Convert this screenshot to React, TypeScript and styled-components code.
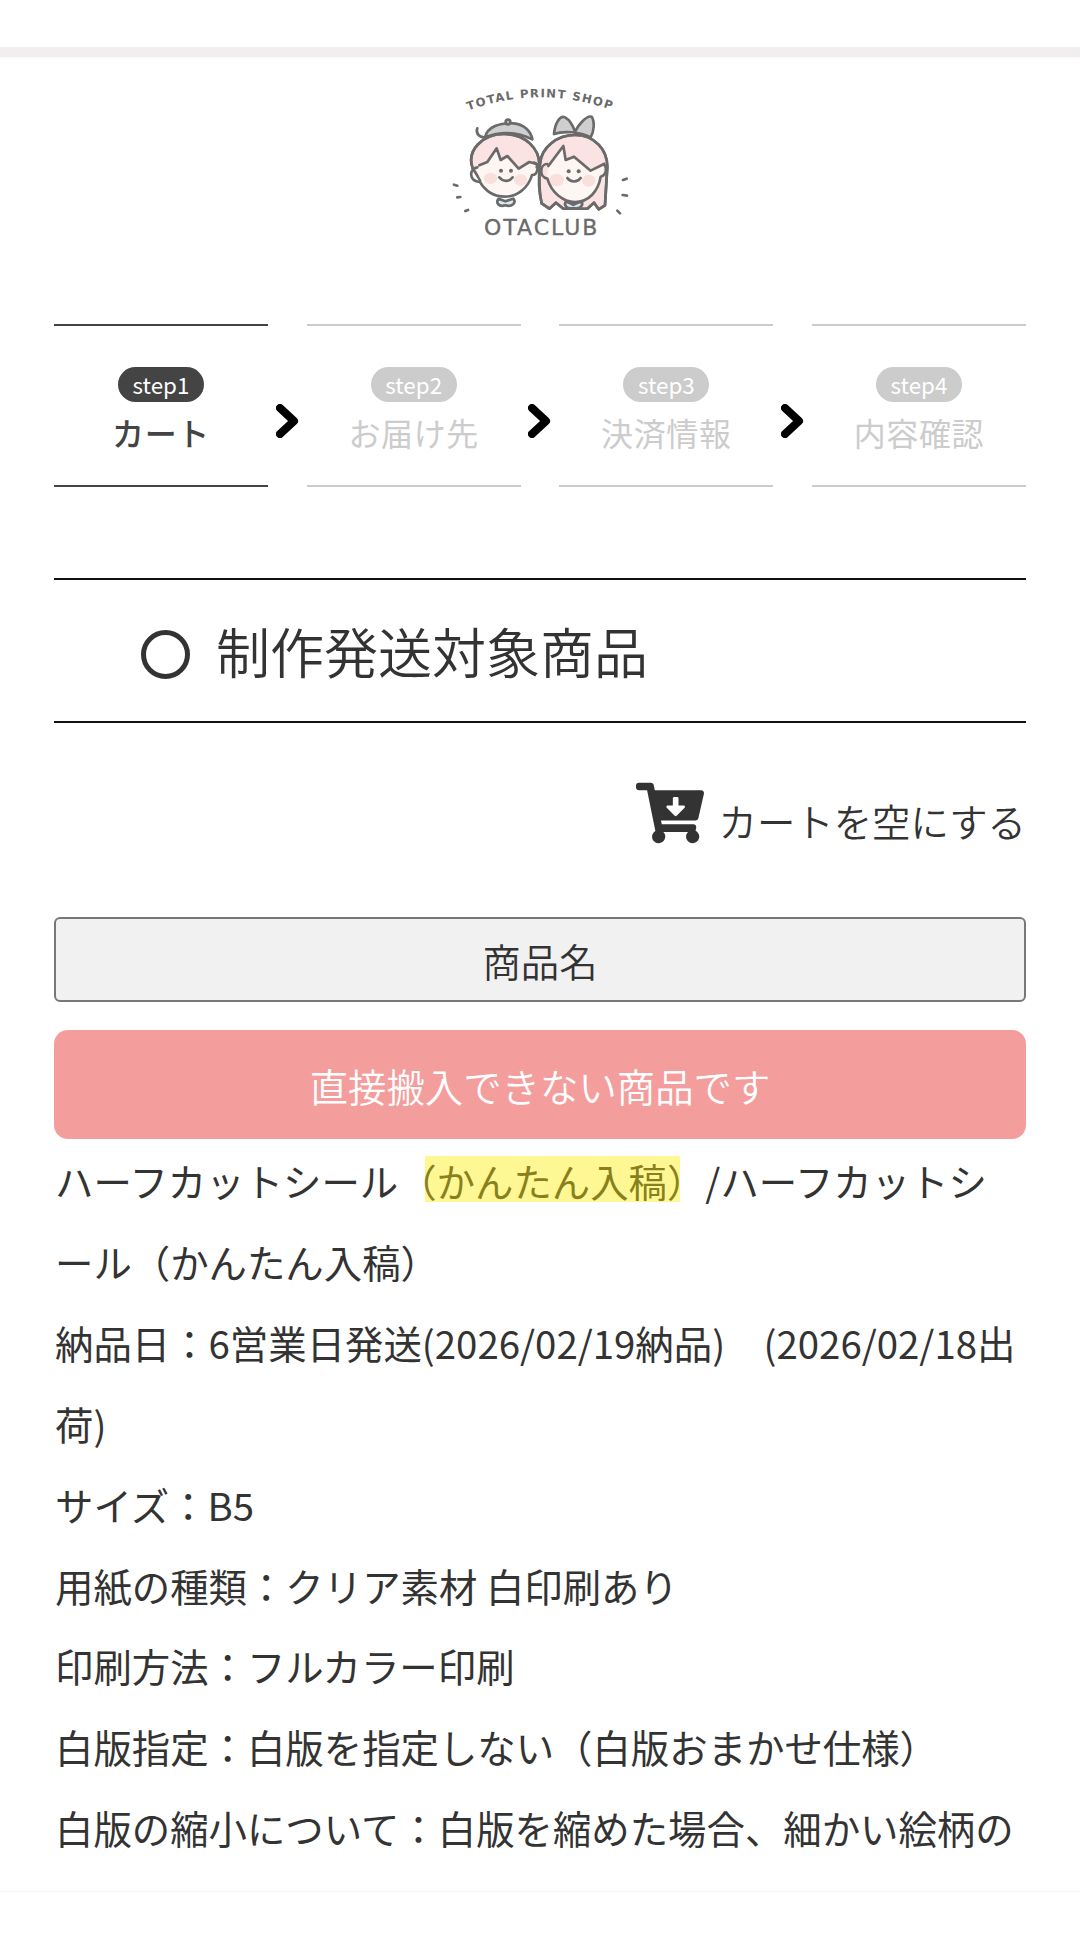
import React from 'react';
import styled, { createGlobalStyle } from 'styled-components';
import { FaCartArrowDown } from 'react-icons/fa';

const GlobalStyle = createGlobalStyle`
    html,
    body {
        margin: 0;
        padding: 0;
        background: #fff;
    }

    body {
        font-family: 'Noto Sans CJK JP', 'Noto Sans', sans-serif;
        color: #333;
    }
`;

const Page = styled.div`
    width: 1080px;
    height: 1942px;
    overflow: hidden;
    display: flex;
    flex-direction: column;
    background: #fff;
`;

const TopBar = styled.div`
    flex: none;
    height: 47px;
    background: #fff;
    border-bottom: 10px solid #f0eeee;
    box-shadow: 0 1px 2px rgba(80, 60, 60, 0.05), 0 -3px 3px rgba(80, 60, 60, 0.02);
`;

const LogoWrap = styled.div`
    flex: none;
    height: 200px;
    margin-top: 3px;
    display: flex;
    justify-content: center;
`;

const Main = styled.main`
    flex: 1;
    min-height: 0;
    overflow: hidden;
    padding: 0 54px;
`;

const Steps = styled.div`
    display: flex;
    align-items: center;
    justify-content: space-between;
    margin-top: 64px;
`;

const Step = styled.div<{ $active?: boolean }>`
    width: 214px;
    height: 163px;
    box-sizing: border-box;
    display: flex;
    flex-direction: column;
    align-items: center;
    padding-top: 41px;
    border-top: 2px solid ${({ $active }) => ($active ? '#444' : '#ccc')};
    border-bottom: 2px solid ${({ $active }) => ($active ? '#444' : '#ccc')};
    color: ${({ $active }) => ($active ? '#444' : '#ccc')};
`;

const StepPill = styled.span<{ $active?: boolean }>`
    width: 86px;
    height: 35px;
    border-radius: 18px;
    display: flex;
    align-items: center;
    justify-content: center;
    background: ${({ $active }) => ($active ? '#444' : '#ccc')};
    color: #fff;
    font-size: 22.4px;
    line-height: 35px;
`;

const StepLabel = styled.span<{ $active?: boolean }>`
    margin-top: 12px;
    font-size: 32px;
    line-height: 36px;
    letter-spacing: 0.6px;
    font-weight: ${({ $active }) => ($active ? 500 : 400)};
`;

const StepArrow = styled.svg`
    flex: none;
    width: 23px;
    height: 34px;
    margin-top: 30px;
`;

const Heading = styled.h2`
    margin: 91px 0 0;
    height: 145px;
    box-sizing: border-box;
    display: flex;
    align-items: center;
    gap: 26px;
    padding: 0 0 0 87px;
    border-top: 2px solid #111;
    border-bottom: 2px solid #111;
    font-size: 54px;
    font-weight: 350;
    color: #333;
`;

const HeadingMark = styled.span`
    flex: none;
    width: 49px;
    height: 49px;
    margin-top: 7px;
    box-sizing: border-box;
    border: 5px solid #333;
    border-radius: 50%;
`;

const EmptyCart = styled.div`
    display: flex;
    justify-content: flex-end;
    align-items: flex-end;
    gap: 14px;
    margin-top: 56px;
    color: #333;
    font-size: 38.4px;
    font-weight: 350;
    line-height: 53px;
`;

const NameHead = styled.div`
    margin-top: 70px;
    height: 85px;
    box-sizing: border-box;
    display: flex;
    align-items: center;
    justify-content: center;
    border: 2px solid #777;
    border-radius: 6px;
    background: #f1f1f1;
    font-size: 38.4px;
    font-weight: 350;
`;

const Notice = styled.div`
    margin-top: 28px;
    height: 109px;
    display: flex;
    align-items: center;
    justify-content: center;
    border-radius: 14px;
    background: #f49d9d;
    color: #fff;
    font-size: 38.4px;
    font-weight: 350;
`;

const Details = styled.div`
    margin: 1px 2px 0 1px;
    font-size: 38.4px;
    font-weight: 400;
    line-height: 80.9px;
    color: #333;
`;

const DetailLine = styled.div``;

const Marked = styled.span`
    position: relative;

    &::after {
        content: '';
        position: absolute;
        left: 27px;
        right: 25px;
        top: 4px;
        height: 46px;
        background: rgba(255, 235, 0, 0.42);
    }
`;

const BottomBar = styled.div`
    flex: none;
    height: 50px;
    background: #fff;
    border-top: 1px solid #f6f6f6;
`;

const LOGO_INK = '#6a6a6a';

const Logo: React.FC = () => (
    <svg width="280" height="200" viewBox="0 0 840 600" fill="none" stroke={LOGO_INK} strokeWidth="8" strokeLinecap="round" strokeLinejoin="round">
        <defs>
            <path id="logo-arc" d="M205 152 Q420 72 640 152" />
        </defs>

        {/* boy */}
        <path d="M255 232 C262 200 300 188 340 190 C370 192 392 212 397 238 C350 215 300 215 255 232Z" fill="#cfcfcf" />
        <path d="M232 205 C226 220 238 232 252 232" />
        <circle cx="324" cy="186" r="7" fill="#cfcfcf" />
        <path d="M218 325 C198 270 250 222 312 222 C375 222 420 265 418 318 L240 360Z" fill="#fae3e2" />
        <path d="M228 320 L262 306 L290 265 L302 300 L322 288 L356 326 L388 306 L408 312 C405 345 385 378 345 396 C325 408 298 406 282 396 C250 380 235 350 228 320Z" fill="#fdf6f2" stroke="none" />
        <ellipse cx="272" cy="355" rx="20" ry="17" fill="#fae0dc" stroke="none" />
        <ellipse cx="362" cy="360" rx="20" ry="17" fill="#fae0dc" stroke="none" />
        <path d="M218 325 C198 270 250 222 312 222 C375 222 420 265 418 318" />
        <path d="M238 316 L262 306 L290 265 L302 300 L322 288 L356 326 L388 306 L410 312" />
        <path d="M232 322 C208 326 204 362 240 366 C258 396 285 410 315 410 C350 410 385 385 396 345 C415 345 418 312 402 308" />
        <circle cx="303" cy="332" r="6" fill={LOGO_INK} stroke="none" />
        <circle cx="333" cy="332" r="6" fill={LOGO_INK} stroke="none" />
        <path d="M298 352 C308 366 328 366 338 352" />
        <path d="M316 424 L296 416 C286 428 296 442 316 436 C336 442 350 428 340 416Z" fill="#dbe9f2" />

        {/* girl */}
        <path d="M462 222 C465 190 480 165 495 172 C510 180 520 200 525 215 C535 195 560 165 575 170 C585 185 582 215 572 232 C540 215 490 212 462 222Z" fill="#cfcfcf" />
        <path d="M420 310 C425 262 470 225 525 225 C585 225 622 270 622 320 L615 436 L596 448 L582 428 L562 446 L490 446 L468 428 L448 446 L425 430 C415 390 418 350 420 310Z" fill="#fae3e2" />
        <path d="M445 318 L490 258 L497 300 L522 290 L572 332 L612 312 L605 360 C590 405 555 425 520 426 C480 426 450 400 440 365Z" fill="#fdf6f2" stroke="none" />
        <ellipse cx="470" cy="360" rx="22" ry="19" fill="#fae0dc" stroke="none" />
        <ellipse cx="566" cy="362" rx="20" ry="18" fill="#fae0dc" stroke="none" />
        <path d="M420 310 C425 262 470 225 525 225 C585 225 622 270 622 320 L615 436 L596 448 L582 428 L562 446" />
        <path d="M420 310 C415 350 415 390 425 430 L448 446 L468 428 L490 446" />
        <path d="M445 318 L490 258 L497 300 L522 290 L572 332 L612 312" />
        <path d="M442 312 C420 312 415 350 442 356 C455 400 490 426 525 426 C565 426 595 395 602 350 C620 345 622 325 612 312" />
        <circle cx="506" cy="334" r="6" fill={LOGO_INK} stroke="none" />
        <circle cx="536" cy="334" r="6" fill={LOGO_INK} stroke="none" />
        <path d="M502 354 C512 368 532 368 542 354" />
        <path d="M520 434 L498 424 C490 436 500 448 520 444 C540 448 552 436 544 424Z" fill="#dbe9f2" />

        {/* sparkle dashes */}
        <path d="M162 374 L172 377 M172 412 L181 411 M196 453 L204 450 M669 360 L680 356 M668 405 L681 407 M652 452 L660 460" />

        <text fontFamily="'DejaVu Sans', sans-serif" fontWeight="700" fontSize="35" letterSpacing="4" fill={LOGO_INK} stroke="none">
            <textPath href="#logo-arc">TOTAL PRINT SHOP</textPath>
        </text>
        <text x="252" y="524" fontFamily="'DejaVu Sans', sans-serif" fontSize="66" letterSpacing="6" fill={LOGO_INK} stroke={LOGO_INK} strokeWidth="1">
            OTACLUB
        </text>
    </svg>
);

const Arrow: React.FC = () => (
    <StepArrow viewBox="0 0 23 34" fill="none" stroke="#000" strokeWidth="8" strokeLinecap="round" strokeLinejoin="round">
        <path d="M4 4 L18 17 L4 30" />
    </StepArrow>
);

const steps = ['カート', 'お届け先', '決済情報', '内容確認'];

const details = [
    '納品日：6営業日発送(2026/02/19納品)　(2026/02/18出荷)',
    'サイズ：B5',
    '用紙の種類：クリア素材 白印刷あり',
    '印刷方法：フルカラー印刷',
    '白版指定：白版を指定しない（白版おまかせ仕様）',
    '白版の縮小について：白版を縮めた場合、細かい絵柄の',
];

const App: React.FC = () => (
    <Page>
        <GlobalStyle />
        <TopBar />
        <LogoWrap>
            <Logo />
        </LogoWrap>

        <Main>
            <Steps>
                {steps.map((label, i) => (
                    <React.Fragment key={label}>
                        {i > 0 && <Arrow />}
                        <Step $active={i === 0}>
                            <StepPill $active={i === 0}>step{i + 1}</StepPill>
                            <StepLabel $active={i === 0}>{label}</StepLabel>
                        </Step>
                    </React.Fragment>
                ))}
            </Steps>

            <Heading>
                <HeadingMark />
                制作発送対象商品
            </Heading>

            <EmptyCart>
                <FaCartArrowDown size={68} />
                カートを空にする
            </EmptyCart>

            <NameHead>商品名</NameHead>
            <Notice>直接搬入できない商品です</Notice>

            <Details>
                <DetailLine>
                    ハーフカットシール<Marked>（かんたん入稿）</Marked>/ハーフカットシール（かんたん入稿）
                </DetailLine>
                {details.map((line) => (
                    <DetailLine key={line}>{line}</DetailLine>
                ))}
            </Details>
        </Main>

        <BottomBar />
    </Page>
);

export default App;
